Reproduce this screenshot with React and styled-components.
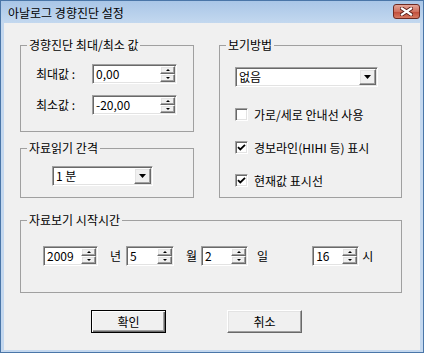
import React from 'react';
import styled, { createGlobalStyle, css } from 'styled-components';

const GlobalStyle = createGlobalStyle`
  html, body {
    margin: 0;
    padding: 0;
    background: #fff;
  }
  body {
    font-family: "Noto Sans CJK KR", "Noto Sans", sans-serif;
    font-size: 12px;
    color: #000;
  }
`;

const raised = css`
  background: #f0f0f0;
  border: 1px solid;
  border-color: #fff #696969 #696969 #fff;
  box-shadow: inset -1px -1px 0 #a0a0a0, inset 1px 1px 0 #e3e3e3;
`;

const sunken = css`
  box-sizing: border-box;
  background: #fff;
  border: 1px solid;
  border-color: #a0a0a0 #fff #fff #a0a0a0;
  box-shadow: inset 1px 1px 0 #696969, inset -1px -1px 0 #e3e3e3;
`;

const Window = styled.div`
  width: 424px;
  height: 353px;
  box-sizing: border-box;
  border: 1px solid #4a76a8;
  background: #c4d8ef;
  display: flex;
  flex-direction: column;
`;

const TitleBar = styled.div`
  height: 22px;
  flex: none;
  box-sizing: border-box;
  display: flex;
  align-items: flex-start;
  justify-content: space-between;
  padding: 3px 3px 0 7px;
  background: linear-gradient(#a9c6e7, #c3d8ef);
`;

const Title = styled.div`
  margin-top: 2px;
  line-height: 14px;
  font-size: 12px;
  color: #000;
`;

const CloseButton = styled.div`
  width: 27px;
  height: 15px;
  box-sizing: border-box;
  border: 1px solid #6e2a22;
  border-radius: 3px;
  background: linear-gradient(#e4a597, #d0705f 50%, #c04a38 51%, #d67a62);
  display: flex;
  align-items: center;
  justify-content: center;
`;

const Body = styled.div`
  flex: 1;
  margin: 0 3px 2px 3px;
  background: #f0f0f0;
  padding: 15px 18px 0 16px;
  display: flex;
  flex-direction: column;
`;

const TopRow = styled.div`
  display: flex;
  gap: 25px;
  align-items: stretch;
`;

const LeftCol = styled.div`
  width: 174px;
  display: flex;
  flex-direction: column;
  gap: 9px;
`;

const Group = styled.fieldset`
  margin: 0;
  padding: 0;
  min-width: 0;
  border: 1px solid #a0a0a0;
  ${p => p.$grow && 'flex: 1;'}
`;

const Legend = styled.legend`
  margin-left: 6px;
  padding: 0 2px;
  font-size: 12px;
  line-height: 14px;
`;

const Inner = styled.div`
  padding: ${p => p.$pad};
  display: flex;
  flex-direction: ${p => (p.$row ? 'row' : 'column')};
  align-items: ${p => (p.$row ? 'center' : 'flex-start')};
  gap: ${p => p.$gap || 0}px;
`;

const FieldRow = styled.div`
  display: flex;
  align-items: center;
  height: 20px;
`;

const Label = styled.span`
  width: 56px;
  line-height: 14px;
`;

const SpinBox = styled.div`
  ${sunken};
  width: ${p => p.$w}px;
  height: 20px;
  padding: 1px;
  display: flex;
`;

const Value = styled.span`
  flex: 1;
  padding-left: 2px;
  line-height: 16px;
  font-size: 12px;
  overflow: hidden;
  white-space: nowrap;
`;

const SpinCol = styled.div`
  width: 15px;
  display: flex;
  flex-direction: column;
`;

const SpinBtn = styled.div`
  ${raised};
  flex: 1;
  box-sizing: border-box;
  display: flex;
  align-items: center;
  justify-content: center;
`;

const Arrow = styled.span`
  width: 0;
  height: 0;
  border-left: 2px solid transparent;
  border-right: 2px solid transparent;
  ${p => (p.$down ? 'border-top: 2px solid #000;' : 'border-bottom: 2px solid #000;')}
`;

const Combo = styled.div`
  ${sunken};
  width: ${p => p.$w}px;
  height: 20px;
  padding: 1px;
  margin-left: ${p => p.$ml || 0}px;
  display: flex;
`;

const DropBtn = styled.div`
  ${raised};
  width: 17px;
  box-sizing: border-box;
  display: flex;
  align-items: center;
  justify-content: center;
`;

const CheckList = styled.div`
  padding-top: 21px;
  display: flex;
  flex-direction: column;
  gap: 20px;
`;

const CheckRow = styled.label`
  display: flex;
  align-items: center;
  gap: 6px;
  height: 13px;
  line-height: 14px;
  white-space: nowrap;
`;

const CheckBox = styled.span`
  ${sunken};
  width: 13px;
  height: 13px;
  display: flex;
  align-items: center;
  justify-content: center;
`;

const Unit = styled.span`
  margin: 0 ${p => p.$mr}px 0 ${p => p.$ml}px;
  line-height: 14px;
`;

const ButtonRow = styled.div`
  display: flex;
  gap: 61px;
  padding-left: 71px;
  margin-top: 17px;
`;

const Button = styled.button`
  ${raised};
  width: 75px;
  height: 23px;
  box-sizing: border-box;
  padding: 0;
  font-family: inherit;
  font-size: 12px;
  color: #000;
  ${p =>
    p.$default &&
    css`
      border-color: #000;
      box-shadow: inset 1px 1px 0 #fff, inset -1px -1px 0 #696969, inset -2px -2px 0 #a0a0a0;
    `}
`;

const Spin = ({ w, value }) => (
  <SpinBox $w={w}>
    <Value>{value}</Value>
    <SpinCol>
      <SpinBtn><Arrow /></SpinBtn>
      <SpinBtn><Arrow $down /></SpinBtn>
    </SpinCol>
  </SpinBox>
);

const Select = ({ w, ml, value }) => (
  <Combo $w={w} $ml={ml}>
    <Value>{value}</Value>
    <DropBtn>
      <svg width="7" height="4" viewBox="0 0 7 4">
        <polygon points="0,0 7,0 3.5,4" fill="#000" />
      </svg>
    </DropBtn>
  </Combo>
);

const Check = ({ checked, children }) => (
  <CheckRow>
    <CheckBox>
      {checked && (
        <svg width="9" height="9" viewBox="0 0 9 9">
          <path d="M1 4.2 L3.3 6.5 L8 1.8" stroke="#000" strokeWidth="1.8" fill="none" />
        </svg>
      )}
    </CheckBox>
    {children}
  </CheckRow>
);

export default function App() {
  return (
    <>
      <GlobalStyle />
      <Window>
        <TitleBar>
          <Title>아날로그 경향진단 설정</Title>
          <CloseButton>
            <svg width="13" height="9" viewBox="0 0 13 9">
              <path d="M2 1.5 L11 7.5 M11 1.5 L2 7.5" stroke="#5a1e18" strokeWidth="4" strokeLinecap="square" />
              <path d="M2 1.5 L11 7.5 M11 1.5 L2 7.5" stroke="#fff" strokeWidth="2.2" strokeLinecap="square" />
            </svg>
          </CloseButton>
        </TitleBar>
        <Body>
          <TopRow>
            <LeftCol>
              <Group>
                <Legend>경향진단 최대/최소 값</Legend>
                <Inner $pad="12px 16px 16px 15px" $gap={11}>
                  <FieldRow>
                    <Label>최대값 :</Label>
                    <Spin w={85} value="0,00" />
                  </FieldRow>
                  <FieldRow>
                    <Label>최소값 :</Label>
                    <Spin w={85} value="-20,00" />
                  </FieldRow>
                </Inner>
              </Group>
              <Group>
                <Legend>자료읽기 간격</Legend>
                <Inner $pad="11px 0 11px 0">
                  <Select w={101} ml={31} value="1 분" />
                </Inner>
              </Group>
            </LeftCol>
            <Group $grow>
              <Legend>보기방법</Legend>
              <Inner $pad="15px 0 0 15px">
                <Select w={143} value="없음" />
                <CheckList>
                  <Check>가로/세로 안내선 사용</Check>
                  <Check checked>경보라인(HIHI 등) 표시</Check>
                  <Check checked>현재값 표시선</Check>
                </CheckList>
              </Inner>
            </Group>
          </TopRow>
          <Group style={{ marginTop: 15 }}>
            <Legend>자료보기 시작시간</Legend>
            <Inner $pad="19px 0 26px 22px" $row>
              <Spin w={55} value="2009" />
              <Unit $ml={12} $mr={5}>년</Unit>
              <Spin w={48} value="5" />
              <Unit $ml={12} $mr={4}>월</Unit>
              <Spin w={47} value="2" />
              <Unit $ml={9} $mr={44}>일</Unit>
              <Spin w={47} value="16" />
              <Unit $ml={3} $mr={0}>시</Unit>
            </Inner>
          </Group>
          <ButtonRow>
            <Button $default>확인</Button>
            <Button>취소</Button>
          </ButtonRow>
        </Body>
      </Window>
    </>
  );
}
